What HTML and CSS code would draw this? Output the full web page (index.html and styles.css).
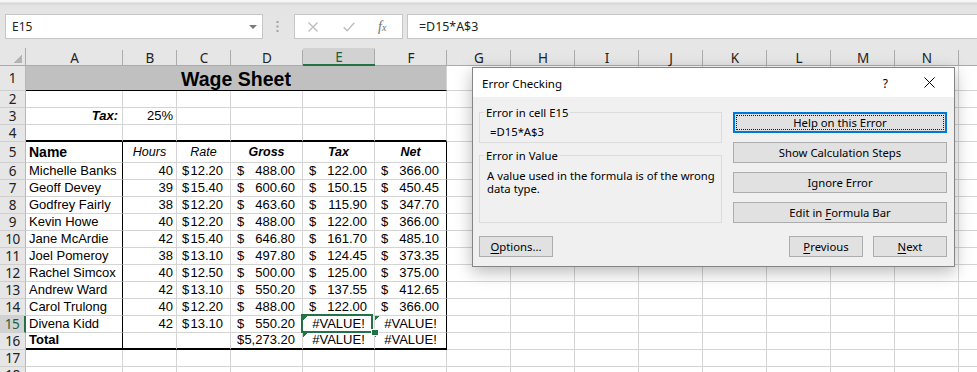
FILE: index.html
```html
<!DOCTYPE html>
<html>
<head>
<meta charset="utf-8">
<title>Wage Sheet - Error Checking</title>
<link rel="stylesheet" href="styles.css">
</head>
<body>
<div class="app">
  <div class="fbar">
    <div class="namebox"><span>E15</span><svg class="nb-arrow" width="8" height="4" viewBox="0 0 8 4"><path d="M0 0H8L4 4Z" fill="#7b7b7b"/></svg></div>
    <div class="grip"><svg width="3" height="11" viewBox="0 0 3 11"><rect x="0.5" y="0" width="2" height="2" fill="#a0a0a0"/><rect x="0.5" y="4.5" width="2" height="2" fill="#a0a0a0"/><rect x="0.5" y="9" width="2" height="2" fill="#a0a0a0"/></svg></div>
    <div class="fxbox">
      <svg width="10" height="10" viewBox="0 0 10 10"><path d="M0.5 0.5L9.5 9.5M9.5 0.5L0.5 9.5" stroke="#bdbdbd" stroke-width="1.3" fill="none"/></svg>
      <svg width="12" height="10" viewBox="0 0 12 10"><path d="M0.7 5.2L4.2 8.8L11.3 0.8" stroke="#bdbdbd" stroke-width="1.4" fill="none"/></svg>
      <span class="fx">f<span class="fxx">x</span></span>
    </div>
    <div class="finput">=D15*A$3</div>
  </div>

  <div class="sheet">
    <div class="corner"></div>
    <div class="hd">A</div><div class="hd">B</div><div class="hd">C</div><div class="hd">D</div><div class="hd hsel">E</div><div class="hd">F</div><div class="hd">G</div><div class="hd">H</div><div class="hd">I</div><div class="hd">J</div><div class="hd">K</div><div class="hd">L</div><div class="hd">M</div><div class="hd">N</div><div class="hd hlast"></div>

    <div class="rh">1</div>
    <div class="c title">Wage Sheet</div>
    <div class="rest"></div>

    <div class="rh">2</div>
    <div class="c"></div><div class="c"></div><div class="c"></div><div class="c"></div><div class="c"></div><div class="c"></div>
    <div class="rest"></div>

    <div class="rh">3</div>
    <div class="c r b i taxlbl">Tax:</div><div class="c r">25%</div><div class="c"></div><div class="c"></div><div class="c"></div><div class="c"></div>
    <div class="rest"></div>

    <div class="rh">4</div>
    <div class="c bb2"></div><div class="c bb2"></div><div class="c bb2"></div><div class="c bb2"></div><div class="c bb2"></div><div class="c bb2"></div>
    <div class="rest"></div>

    <div class="rh">5</div>
    <div class="c brk hdr b name">Name</div>
    <div class="c hdr ctr i">Hours</div>
    <div class="c hdr ctr i">Rate</div>
    <div class="c hdr ctr b i">Gross</div>
    <div class="c hdr ctr b i">Tax</div>
    <div class="c hdr ctr b i brk">Net</div>
    <div class="rest"></div>

    <div class="rh">6</div>
    <div class="c brk">Michelle Banks</div><div class="c r">40</div>
    <div class="c acc rate"><span>$</span><span>12.20</span></div>
    <div class="c acc"><span>$</span><span>488.00</span></div>
    <div class="c acc"><span>$</span><span>122.00</span></div>
    <div class="c acc brk"><span>$</span><span>366.00</span></div>
    <div class="rest"></div>

    <div class="rh">7</div>
    <div class="c brk">Geoff Devey</div><div class="c r">39</div>
    <div class="c acc rate"><span>$</span><span>15.40</span></div>
    <div class="c acc"><span>$</span><span>600.60</span></div>
    <div class="c acc"><span>$</span><span>150.15</span></div>
    <div class="c acc brk"><span>$</span><span>450.45</span></div>
    <div class="rest"></div>

    <div class="rh">8</div>
    <div class="c brk">Godfrey Fairly</div><div class="c r">38</div>
    <div class="c acc rate"><span>$</span><span>12.20</span></div>
    <div class="c acc"><span>$</span><span>463.60</span></div>
    <div class="c acc"><span>$</span><span>115.90</span></div>
    <div class="c acc brk"><span>$</span><span>347.70</span></div>
    <div class="rest"></div>

    <div class="rh">9</div>
    <div class="c brk">Kevin Howe</div><div class="c r">40</div>
    <div class="c acc rate"><span>$</span><span>12.20</span></div>
    <div class="c acc"><span>$</span><span>488.00</span></div>
    <div class="c acc"><span>$</span><span>122.00</span></div>
    <div class="c acc brk"><span>$</span><span>366.00</span></div>
    <div class="rest"></div>

    <div class="rh">10</div>
    <div class="c brk">Jane McArdie</div><div class="c r">42</div>
    <div class="c acc rate"><span>$</span><span>15.40</span></div>
    <div class="c acc"><span>$</span><span>646.80</span></div>
    <div class="c acc"><span>$</span><span>161.70</span></div>
    <div class="c acc brk"><span>$</span><span>485.10</span></div>
    <div class="rest"></div>

    <div class="rh">11</div>
    <div class="c brk">Joel Pomeroy</div><div class="c r">38</div>
    <div class="c acc rate"><span>$</span><span>13.10</span></div>
    <div class="c acc"><span>$</span><span>497.80</span></div>
    <div class="c acc"><span>$</span><span>124.45</span></div>
    <div class="c acc brk"><span>$</span><span>373.35</span></div>
    <div class="rest"></div>

    <div class="rh">12</div>
    <div class="c brk">Rachel Simcox</div><div class="c r">40</div>
    <div class="c acc rate"><span>$</span><span>12.50</span></div>
    <div class="c acc"><span>$</span><span>500.00</span></div>
    <div class="c acc"><span>$</span><span>125.00</span></div>
    <div class="c acc brk"><span>$</span><span>375.00</span></div>
    <div class="rest"></div>

    <div class="rh">13</div>
    <div class="c brk">Andrew Ward</div><div class="c r">42</div>
    <div class="c acc rate"><span>$</span><span>13.10</span></div>
    <div class="c acc"><span>$</span><span>550.20</span></div>
    <div class="c acc"><span>$</span><span>137.55</span></div>
    <div class="c acc brk"><span>$</span><span>412.65</span></div>
    <div class="rest"></div>

    <div class="rh">14</div>
    <div class="c brk">Carol Trulong</div><div class="c r">40</div>
    <div class="c acc rate"><span>$</span><span>12.20</span></div>
    <div class="c acc"><span>$</span><span>488.00</span></div>
    <div class="c acc"><span>$</span><span>122.00</span></div>
    <div class="c acc brk"><span>$</span><span>366.00</span></div>
    <div class="rest"></div>

    <div class="rh rsel">15</div>
    <div class="c brk">Divena Kidd</div><div class="c r">42</div>
    <div class="c acc rate"><span>$</span><span>13.10</span></div>
    <div class="c acc"><span>$</span><span>550.20</span></div>
    <div class="c ctr err sel"><span>#VALUE!</span><span class="handle"></span></div>
    <div class="c ctr err brk">#VALUE!</div>
    <div class="rest"></div>

    <div class="rh">16</div>
    <div class="c brk bb2 b">Total</div><div class="c bb2"></div><div class="c bb2"></div>
    <div class="c acc bb2"><span>$</span><span>5,273.20</span></div>
    <div class="c ctr err bb2">#VALUE!</div>
    <div class="c ctr err bb2 brk">#VALUE!</div>
    <div class="rest"></div>

    <div class="rh">17</div>
    <div class="c"></div><div class="c"></div><div class="c"></div><div class="c"></div><div class="c"></div><div class="c"></div>
    <div class="rest"></div>

    <div class="rh">18</div>
    <div class="c"></div><div class="c"></div><div class="c"></div><div class="c"></div><div class="c"></div><div class="c"></div>
    <div class="rest"></div>
  </div>

  <div class="dlg">
    <div class="dlg-title">
      <span class="dlg-caption">Error Checking</span>
      <span class="dlg-help">?</span>
      <svg class="dlg-close" width="11" height="11" viewBox="0 0 11 11"><path d="M0.5 0.5L10.5 10.5M10.5 0.5L0.5 10.5" stroke="#000" stroke-width="1" fill="none"/></svg>
    </div>
    <div class="dlg-body">
      <div class="dlg-top">
        <div class="dlg-left">
          <div class="group g1">
            <div class="legend">Error in cell E15</div>
            <div class="gformula">=D15*A$3</div>
          </div>
          <div class="group g2">
            <div class="legend">Error in Value</div>
            <div class="gmsg">A value used in the formula is of the wrong<br>data type.</div>
          </div>
        </div>
        <div class="dlg-btns">
          <div class="btn focus"><span class="ring">Help on this Error</span></div>
          <div class="btn"><span>Show Calculation Steps</span></div>
          <div class="btn"><span>Ignore Error</span></div>
          <div class="btn"><span>Edit in <u>F</u>ormula Bar</span></div>
        </div>
      </div>
      <div class="dlg-bottom">
        <div class="btn small"><span><u>O</u>ptions...</span></div>
        <div class="spacer"></div>
        <div class="btn small"><span><u>P</u>revious</span></div>
        <div class="btn small"><span><u>N</u>ext</span></div>
      </div>
    </div>
  </div>
</div>
</body>
</html>
```

FILE: styles.css
```css
*, *::before, *::after { box-sizing: border-box; }
html, body { margin: 0; padding: 0; }
body {
  width: 977px;
  height: 372px;
  overflow: hidden;
  background: #fff;
  font-family: "Liberation Sans", Arial, sans-serif;
}
.app { position: relative; width: 977px; height: 372px; overflow: hidden; }

/* ---------- formula bar ---------- */
.fbar {
  height: 48px;
  display: flex;
  align-items: flex-start;
  padding-top: 14px;
  background: linear-gradient(#f6f6f6 0, #f6f6f6 2px, #d6d6d6 3px, #e4e4e4 6px, #e6e6e6 100%);
  font-family: "Noto Sans", "Open Sans", sans-serif;
}
.namebox {
  margin-left: 5px;
  width: 258px;
  height: 25px;
  background: #fff;
  border: 1px solid #c6c6c6;
  display: flex;
  align-items: center;
  justify-content: space-between;
  padding: 0 5px 0 6px;
  font-size: 12px;
  color: #222;
}
.nb-arrow { display: block; }
.grip {
  width: 31px;
  height: 25px;
  display: flex;
  align-items: center;
  justify-content: center;
}
.grip svg { display: block; margin-left: -2px; }
.fxbox {
  width: 109px;
  height: 25px;
  background: #fff;
  border: 1px solid #c6c6c6;
  display: flex;
  align-items: center;
  padding-left: 13px;
  gap: 25px;
}
.fxbox svg { display: block; flex: none; }
.fx {
  font-family: "Liberation Serif", "DejaVu Serif", serif;
  font-style: italic;
  font-size: 14px;
  color: #6e6e6e;
  margin-left: -2px;
  line-height: 1;
}
.fxx { font-size: 10px; margin-left: 0; }
.finput {
  margin-left: 4px;
  flex: 1;
  height: 25px;
  margin-right: -3px;
  background: #fff;
  border: 1px solid #c6c6c6;
  display: flex;
  align-items: center;
  padding-left: 11px;
  font-size: 12.4px;
  color: #222;
}

/* ---------- sheet ---------- */
.sheet {
  display: grid;
  grid-template-columns: 26px 97px 54px 54px 72px 72px 72px repeat(8, 64px) 1fr;
  grid-template-rows: 18px 25px 17px 17px 17px 21px repeat(13, 17px);
  font-size: 13px;
  color: #000;
}
.corner {
  background:
    linear-gradient(135deg, transparent 0 50%, #b4b4b4 50%) 13px 6px / 9px 9px no-repeat,
    #e6e6e6;
  border-right: 1px solid #ababab;
  border-bottom: 1px solid #ababab;
}
.hd {
  background:
    linear-gradient(#ababab, #ababab) right bottom / 1px 15px no-repeat,
    #e6e6e6;
  border-bottom: 1px solid #ababab;
  display: flex;
  align-items: center;
  justify-content: center;
  font-family: "Noto Sans", "Open Sans", sans-serif;
  font-size: 13.5px;
  color: #222;
  padding-top: 2px;
}
.hd.hlast { background: #e6e6e6; }
.hd.hsel {
  background:
    linear-gradient(#ababab, #ababab) right bottom / 1px 15px no-repeat,
    #d2d2d2;
  border-bottom: 2px solid #217346;
  color: #1d5f3a;
}
.rh {
  background: #e6e6e6;
  border-right: 1px solid #b8b8b8;
  border-bottom: 1px solid #cfcfcf;
  display: flex;
  align-items: center;
  justify-content: center;
  font-family: "Noto Sans", "Open Sans", sans-serif;
  font-size: 13.5px;
  letter-spacing: -0.4px;
  color: #222;
}
.rh.rsel {
  background: #d2d2d2;
  border-right: 2px solid #217346;
  color: #1d5f3a;
}
.c {
  border-right: 1px solid #d4d4d4;
  border-bottom: 1px solid #d4d4d4;
  display: flex;
  align-items: flex-end;
  padding: 0 3px 1px 3px;
  line-height: 15px;
  white-space: nowrap;
  overflow: hidden;
}
.rest {
  grid-column: 8 / -1;
  border-bottom: 1px solid #d4d4d4;
  background: repeating-linear-gradient(90deg, transparent 0 63px, #d4d4d4 63px 64px);
}
.r { justify-content: flex-end; }
.ctr { justify-content: center; }
.b { font-weight: bold; }
.i { font-style: italic; }
.taxlbl { padding-right: 4px; }
.title {
  grid-column: span 6;
  background: #c0c0c0;
  border-bottom: 1px solid #000;
  justify-content: center;
  font-weight: bold;
  font-size: 19.5px;
  line-height: 22px;
  padding-bottom: 0;
}
.hdr { font-size: 12.5px; line-height: 16px; padding-bottom: 2px; }
.hdr.name { font-size: 14px; }
.acc { justify-content: space-between; padding: 0 7px 1px 6px; }
.acc.rate { padding-left: 5px; }
.bb2 { border-bottom: 2px solid #000; }
.brk { border-right-color: #000; }
.err {
  background: linear-gradient(135deg, #1f7a3f 0 3.2px, transparent 3.3px) 0 0 / 7px 7px no-repeat;
}
.sel { position: relative; overflow: visible; }
.sel::before {
  content: "";
  position: absolute;
  left: -2px;
  top: -2px;
  width: 72px;
  height: 19px;
  border: 2px solid #217346;
}
.handle {
  position: absolute;
  left: 68px;
  top: 13px;
  width: 8px;
  height: 7px;
  background: #217346;
  border: 1px solid #fff;
  z-index: 2;
}

/* ---------- dialog ---------- */
.dlg {
  position: absolute;
  left: 472px;
  top: 67px;
  width: 483px;
  height: 200px;
  border: 1px solid #858585;
  background: #f0f0f0;
  box-shadow: 0 5px 16px rgba(0, 0, 0, 0.28);
  display: flex;
  flex-direction: column;
  font-family: "Noto Sans", "Open Sans", sans-serif;
  font-size: 11.3px;
  color: #000;
}
.dlg-title {
  height: 29px;
  background: #fff;
  display: flex;
  align-items: center;
  padding: 0 19px 0 9px;
  font-size: 11.5px;
}
.dlg-caption { flex: 1; padding-top: 1px; }
.dlg-help { font-size: 12px; margin-right: 36px; padding-top: 1px; }
.dlg-close { display: block; }
.dlg-body { flex: 1; padding: 15px 7px 0 6px; }
.dlg-top { display: flex; gap: 11px; }
.dlg-left { width: 243px; }
.group { border: 1px solid #dcdcdc; }
.g1 { height: 31px; }
.g2 { height: 68px; margin-top: 12px; }
.legend {
  margin: -8px 0 0 4px;
  padding: 0 2px;
  width: max-content;
  background: #f0f0f0;
  line-height: 15px;
}
.gformula { margin: 4px 0 0 10px; line-height: 15px; }
.gmsg { margin: 6px 0 0 7px; line-height: 13px; }
.dlg-btns {
  width: 214px;
  display: flex;
  flex-direction: column;
  gap: 9px;
}
.btn {
  height: 21px;
  border: 1px solid #adadad;
  background: #e1e1e1;
  display: flex;
  align-items: center;
  justify-content: center;
  white-space: nowrap;
}
.btn.focus { border: 2px solid #0078d7; padding: 1px; }
.btn .ring {
  flex: 1;
  align-self: stretch;
  border: 1px dotted #1a1a1a;
  display: flex;
  align-items: center;
  justify-content: center;
}
.dlg-bottom { display: flex; margin-top: 13px; gap: 10px; }
.btn.small { width: 74px; }
.spacer { flex: 1; }
u { text-decoration-thickness: 1px; text-underline-offset: 2px; }
```
